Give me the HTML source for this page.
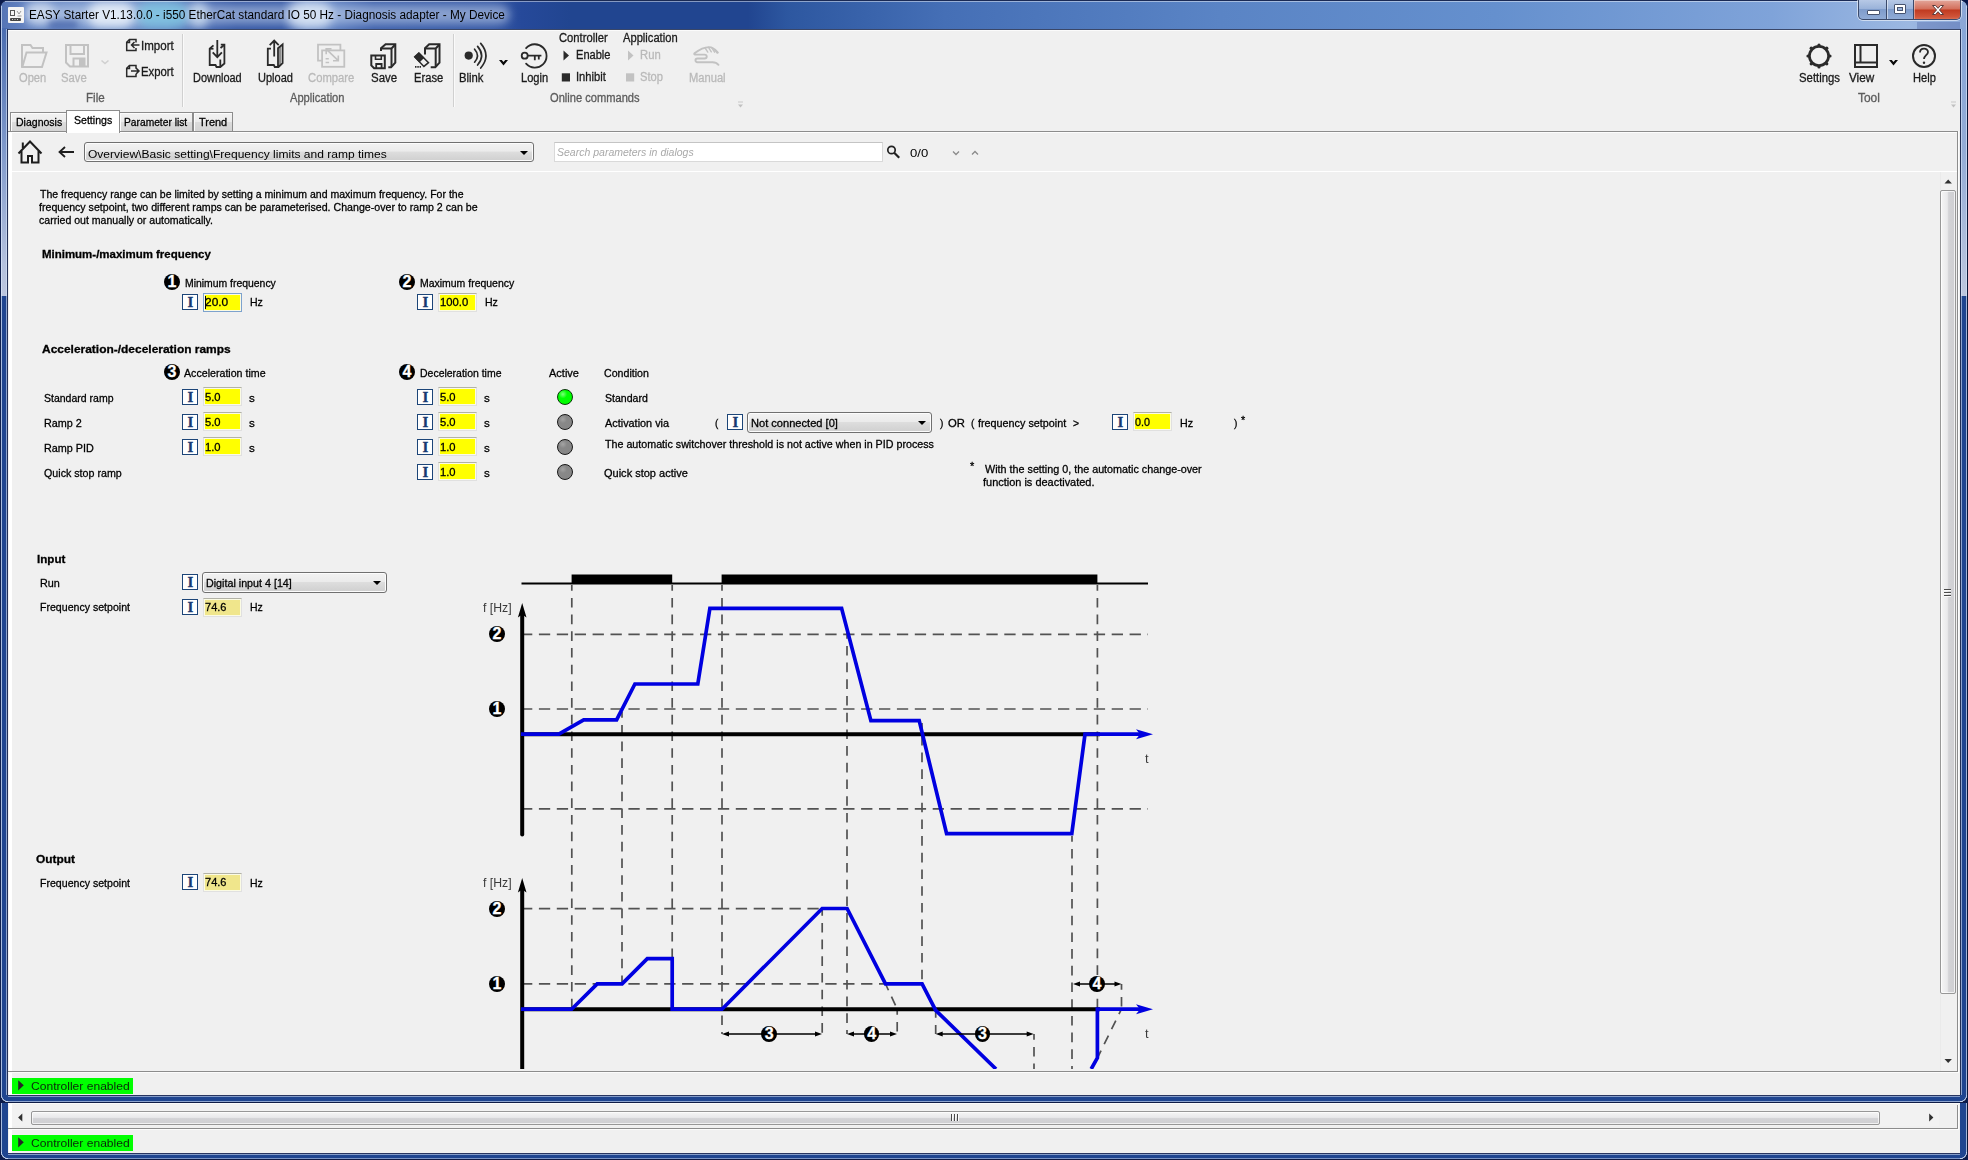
<!DOCTYPE html>
<html><head><meta charset="utf-8"><title>EASY Starter</title>
<style>
html,body{margin:0;padding:0;}
body{width:1968px;height:1160px;overflow:hidden;position:relative;background:#1f4590;font-family:"Liberation Sans",sans-serif;font-size:11px;color:#000;}
div,span,svg{position:absolute;box-sizing:border-box;}
.t{white-space:pre;line-height:1;transform-origin:0 0;display:block;-webkit-text-stroke:0.3px currentColor;}
.ib{width:16px;height:16px;background:#fff;border:1.2px solid #1c4578;padding-left:0.800px;overflow:hidden;text-align:center;font-family:"Liberation Serif",serif;font-weight:700;font-size:15px;line-height:15px;color:#173a72;-webkit-text-stroke:0.3px #173a72;}
.fld{height:19px;width:39px;border:1px solid #e0e0e0;border-top-color:#b2b2a6;background:#fbfbe4;}
.fld>i{position:absolute;left:1px;top:1px;right:1px;bottom:1px;background:#ff0;}
.fld.k>i{background:#f0e68c;}
.led{width:16px;height:16px;border-radius:50%;border:1.4px solid #161616;background:radial-gradient(circle at 35% 30%,#a4a4a4 0,#888 30%,#858585 100%);}
.led.g{background:radial-gradient(circle at 35% 30%,#7cff7c 0,#00ff00 32%,#00fa00 100%);border-color:#063806;}
.cn{width:16px;height:16px;border-radius:50%;background:#000;color:#fff;font-weight:700;font-size:16px;line-height:16.5px;text-align:center;-webkit-text-stroke:0.3px #fff;}
.dd{height:21px;border:1px solid #707070;border-radius:3px;background:linear-gradient(#f2f2f2 0,#ebebeb 45%,#dddddd 50%,#cfcfcf 100%);box-shadow:inset 0 0 0 1px #fcfcfc;}
.dd:after{content:"";position:absolute;right:5px;top:8px;border:4px solid transparent;border-top:4px solid #000;border-bottom:none;}

</style></head>
<body>
<!-- frame -->
<div style="left:0;top:0;width:1968px;height:30px;background:linear-gradient(90deg,#5473b4 0,#6585c3 1.5%,#7090c9 4%,#6a8cc8 8.500%,#4567b0 10.300%,#3558a5 12%,#3457a5 14.300%,#6a8bc8 15.600%,#5c7ec0 17%,#3d60ab 19%,#3558a5 25%,#26499a 26.500%,#214590 29%,#214590 38%,#2d57a0 40%,#456fb6 48%,#5a84c5 62%,#6590ce 76%,#7fa3d9 90%,#9cb8e2 97%,#8aa6d6 100%);"></div>
<div style="left:28px;top:5px;width:482px;height:19px;border-radius:10px;background:rgba(215,228,246,.5);filter:blur(4px);"></div>
<div style="left:24px;top:2px;width:30px;height:22px;border-radius:10px;background:rgba(235,242,252,.55);filter:blur(4px);"></div>
<div style="left:88px;top:2px;width:46px;height:26px;border-radius:12px;background:rgba(240,246,253,.8);filter:blur(5px);"></div>
<div style="left:138px;top:2px;width:50px;height:26px;border-radius:12px;background:rgba(110,200,225,.6);filter:blur(5px);"></div>
<div style="left:190px;top:2px;width:18px;height:26px;border-radius:8px;background:rgba(225,240,250,.6);filter:blur(4px);"></div>
<div style="left:288px;top:2px;width:44px;height:26px;border-radius:12px;background:rgba(235,243,252,.7);filter:blur(5px);"></div>
<div style="left:48px;top:20px;width:30px;height:9px;border-radius:4px;background:rgba(40,70,150,.5);filter:blur(3px);"></div>
<div style="left:0;top:0;width:1968px;height:1px;background:#1a2a55;"></div>
<div style="left:1px;top:1px;width:1966px;height:1px;background:rgba(255,255,255,.45);"></div>
<div style="left:0;top:28px;width:8px;height:268px;background:linear-gradient(#4a6cb0 0,#7f99cb 45%,#b4c1dd 88%,#bcc6de 100%);"></div>
<div style="left:1960px;top:28px;width:8px;height:268px;background:linear-gradient(#88a6d8 0,#93abd6 45%,#b4c1dd 88%,#bcc6de 100%);"></div>
<div style="left:0;top:6px;width:1px;height:1150px;background:#10204e;"></div>
<div style="left:1px;top:6px;width:1px;height:1150px;background:rgba(215,228,248,.75);"></div>
<div style="left:6px;top:29px;width:1px;height:1068px;background:rgba(215,228,248,.6);"></div>
<div style="left:7px;top:29px;width:1px;height:1068px;background:#222f55;"></div>
<div style="left:1967px;top:6px;width:1px;height:1150px;background:#0b1638;"></div>
<div style="left:1966px;top:6px;width:1px;height:1150px;background:rgba(215,228,248,.7);"></div>
<div style="left:1961px;top:29px;width:1px;height:1068px;background:rgba(215,228,248,.6);"></div>
<div style="left:1960px;top:29px;width:1px;height:1068px;background:#222f55;"></div>
<div style="left:0;top:0;width:8px;height:8px;background:radial-gradient(circle at 8px 8px,rgba(0,0,0,0) 7px,#1a2a55 7.5px,#0a1a4a 8.5px);"></div>
<div style="left:1960px;top:0;width:8px;height:8px;background:radial-gradient(circle at 0 8px,rgba(0,0,0,0) 7px,#1a2a55 7.5px,#07154a 8.5px);"></div>
<div style="left:1917px;top:22px;width:43px;height:7px;background:rgba(70,90,160,.33);"></div>
<div style="left:8px;top:7px;width:16px;height:16px;background:#f4f4f4;border-radius:1px;"></div>
<svg style="left:8px;top:7px" width="16" height="16" viewBox="0 0 16 16"><rect x="2.5" y="3.5" width="4" height="5" fill="none" stroke="#555" stroke-width="1"/><path d="M9 4 l2 3 l2 -3 M9.5 9 h4" fill="none" stroke="#999" stroke-width="1"/><rect x="2" y="11" width="11" height="3" rx="1" fill="#444"/><path d="M4 12.5h1M6.5 12.5h1M9 12.5h1" stroke="#ccc" stroke-width="1"/></svg>
<span class="t" style="left:28.7px;top:8.8px;font-size:12px;color:#000;-webkit-text-stroke:0;transform:scaleX(0.9819);">EASY Starter V1.13.0.0 - i550 EtherCat standard IO 50 Hz - Diagnosis adapter - My Device</span>
<div style="left:1858px;top:0;width:103px;height:20px;border:1px solid #3b4a6b;border-top:none;border-radius:0 0 5px 5px;background:linear-gradient(#b7c9e6 0,#9bb3da 45%,#7f9ccb 50%,#90abd6 100%);box-shadow:0 0 0 1px rgba(255,255,255,.55);overflow:hidden;"><div style="left:27px;top:0;width:1px;height:20px;background:#3b4a6b;"></div><div style="left:28px;top:0;width:1px;height:20px;background:rgba(255,255,255,.5);"></div><div style="left:54px;top:0;width:1px;height:20px;background:#3b4a6b;"></div><div style="left:55px;top:0;width:48px;height:20px;background:linear-gradient(#e3a79b 0,#d36f5b 45%,#c03a20 50%,#d0553a 85%,#dc7a5c 100%);box-shadow:inset 0 0 0 1px rgba(255,255,255,.4);"></div><div style="left:8px;top:10px;width:13px;height:5px;background:#fff;border:1px solid #47536f;border-radius:1px;"></div><div style="left:35px;top:4px;width:12px;height:10px;background:#fff;border:1px solid #47536f;border-radius:1px;"></div><div style="left:38px;top:7px;width:6px;height:4px;background:#9bb3da;border:1px solid #47536f;"></div><svg style="left:71px;top:4px" width="16" height="12" viewBox="0 0 16 12"><path d="M2.5 1.5h3l2.5 2.8l2.500 -2.800h3l-4 4.500l4 4.500h-3l-2.500 -2.800l-2.500 2.800h-3l4 -4.500z" fill="#fff" stroke="#5b3a3a" stroke-width="1" stroke-linejoin="round"/></svg></div>
<div style="left:8px;top:30px;width:1952px;height:1065px;background:#f0f0f0;"></div>
<div style="left:8px;top:29px;width:1952px;height:1px;background:#3a4768;"></div>
<div style="left:8px;top:30px;width:1952px;height:1px;background:#fbfbfb;"></div>
<!-- ribbon -->
<div style="left:182px;top:34px;width:1px;height:73px;background:#d0d0d0;"></div>
<div style="left:183px;top:34px;width:1px;height:73px;background:#fafafa;"></div>
<div style="left:453px;top:34px;width:1px;height:73px;background:#d0d0d0;"></div>
<div style="left:454px;top:34px;width:1px;height:73px;background:#fafafa;"></div>
<svg style="left:0;top:0" width="1968" height="132" viewBox="0 0 1968 132" fill="none" stroke-linecap="butt" stroke-linejoin="miter">
<g stroke="#c2c2c2" stroke-width="2"><path d="M22 67V45h8.500l2 3h10.500v4.500"/><path d="M22.300 67l4.200 -14.500h20l-4.500 14.500z"/></g>
<g stroke="#c2c2c2" stroke-width="2"><path d="M66 45h22v21.500h-18l-4 -4z"/><path d="M70.500 45v9h13.500v-9"/><path d="M73.500 66v-7.500h11v7.500"/><rect x="79" y="59" width="5" height="7" fill="#c2c2c2" stroke="none"/></g>
<path d="M101.500 60.500l3.500 3l3.500 -3" stroke="#d0d0d0" stroke-width="1.600"/>
<g stroke="#2a2a2a" stroke-width="1.500"><path d="M136 42.500v-3h-6.500l-2.800 2.800v8.200h9.300v-2.500"/><path d="M129.500 39.500v3h-2.800"/><path d="M139.500 45h-8M134.500 42l-3 3l3 3"/></g>
<g stroke="#2a2a2a" stroke-width="1.500"><path d="M136 68.500v-3h-6.500l-2.800 2.800v8.200h9.300v-2.500"/><path d="M129.500 65.500v3h-2.800"/><path d="M131 71h8M136 68l3 3l-3 3"/></g>
<g stroke="#2a2a2a" stroke-width="1.800"><path d="M213.500 45.300L209.700 48.700V65H215.500L216.500 67H220.300L224.400 63.500V44.700H220.800"/><path d="M209.700 48.700H213.500"/><path d="M224.400 44.700L220.500 48"/><path d="M220.300 59.500V67"/><path d="M217.300 40V57M212.700 52.300L217.300 57.200L221.900 52.300"/></g>
<g stroke="#2a2a2a" stroke-width="1.800"><path d="M271 48.700H267.800V65H273.800L274.800 67H278.500L282.600 63.200V44.400L278 48.200V66.500"/><path d="M280 47V65" stroke-width="1"/><path d="M274.200 56.400V41M269.700 45.200L274.200 40.600L278.700 45.200"/></g>
<g stroke="#c2c2c2" stroke-width="1.800"><path d="M322 60.700h-4v-16h22.400v5.500"/><rect x="322.100" y="50.400" width="22.200" height="16.400"/><path d="M326.500 49.400l11.500 11M326.200 54.200v-5.300h5.300M338.300 55.400v5.300h-5.300" stroke-width="1.600"/><path d="M325.600 58.800h3.200M325.600 62.600h3.500" stroke-width="1.500"/></g>
<g stroke="#2a2a2a" stroke-width="2"><path d="M371.300 55.500h13.500v12.700h-10.700l-2.800 -2.800z"/><path d="M375.500 55.500v3.800h5.800v-3.800" stroke-width="1.600"/><path d="M376.200 68.200v-4.200h5.400v4.200" stroke-width="1.800"/><path d="M381 51v-2.700l4.600 -4h9.700v18.300l-4.200 4.600h-2.800"/><path d="M381 48.500h10.500v18.300M391.500 48.500l3.800 -4"/></g>
<g stroke="#2a2a2a" stroke-width="2"><path d="M425 54.500v-6.200l4.200 -4h10.300v18.300l-4.200 4.600h-4.600"/><path d="M425 48.500h10.700v18.300M435.700 48.500l3.800 -4"/><path d="M414 56.900l4.900 -4.600l5.500 5.500l-5 4.700z" fill="#2a2a2a" stroke="none"/><path d="M414.700 56.900l4.200 -3.900l9.600 9.600l-4.600 3.800z" stroke-width="1.500"/><path d="M415 66.800h6" stroke-width="1.700" stroke-dasharray="1.500 0.800"/></g>
<circle cx="468.700" cy="55.600" r="4.100" fill="#2a2a2a"/>
<g stroke="#2a2a2a" stroke-width="1.700" stroke-linecap="round"><path d="M474.600 49.200Q480.400 55.700 474.600 62.200"/><path d="M477.600 46.400Q485.600 55.700 477.600 65"/><path d="M480.700 43.400Q491.200 55.700 480.700 68"/></g>
<path d="M499 60h2.800l1.700 2l1.700 -2h2.800l-4.500 5.600z" fill="#0a0a0a"/>
<g stroke="#2a2a2a" stroke-width="1.800" stroke-linecap="round"><path d="M526.100 48.200a11.700 11.700 0 1 1 0 15.500"/><circle cx="524.700" cy="55.700" r="3"/><path d="M528 55.700h13.400M534.800 56v4.200M538.800 56v3.500" stroke-linecap="butt"/></g>
<path d="M563.500 50.500l5.500 5l-5.500 5z" fill="#2a2a2a"/>
<rect x="561.800" y="73.300" width="8.200" height="8.200" fill="#2a2a2a"/>
<path d="M628 50.500l5.500 5l-5.500 5z" fill="#c2c2c2"/>
<rect x="626" y="73.300" width="8.200" height="8.200" fill="#c2c2c2"/>
<g stroke="#c2c2c2" stroke-width="1.900" stroke-linecap="round"><path d="M717.900 52.600C715 49 712 47.100 709 47.100C704 47.100 700 49 694.500 53.300C693.800 54.200 694.500 54.600 696 54.600H704.500C707.500 54.600 707.500 58.500 704.500 58.500H697.500C694.800 58.500 694.800 62.200 697.500 62.200H712.500C715 62.200 717 63 718.500 64.800"/><path d="M705 47.800l2.800 4.300M708.500 47.300l2.800 4.500M711.800 47.800l2.800 4.400M714.800 49.500l2.400 3.600" stroke-width="1.400"/></g>
<path d="M738 102h5" stroke="#c8c8c8" stroke-width="1"/><path d="M738 104.5h5l-2.500 3z" fill="#c0c0c0"/>
<path d="M1951 102h5" stroke="#c8c8c8" stroke-width="1"/><path d="M1951 104.5h5l-2.500 3z" fill="#c0c0c0"/>
<circle cx="1819.0" cy="56.0" r="9.600" stroke="#2a2a2a" stroke-width="2.700"/>
<circle cx="1819.00" cy="45.00" r="1.600" fill="#2a2a2a"/>
<circle cx="1826.78" cy="48.22" r="1.600" fill="#2a2a2a"/>
<circle cx="1830.00" cy="56.00" r="1.600" fill="#2a2a2a"/>
<circle cx="1826.78" cy="63.78" r="1.600" fill="#2a2a2a"/>
<circle cx="1819.00" cy="67.00" r="1.600" fill="#2a2a2a"/>
<circle cx="1811.22" cy="63.78" r="1.600" fill="#2a2a2a"/>
<circle cx="1808.00" cy="56.00" r="1.600" fill="#2a2a2a"/>
<circle cx="1811.22" cy="48.22" r="1.600" fill="#2a2a2a"/>
<g stroke="#2a2a2a" stroke-width="2"><rect x="1855" y="45" width="22" height="22"/><path d="M1860.500 45v17.500M1855 62.500h22" /></g>
<path d="M1889 60h2.800l1.700 2l1.700 -2h2.800l-4.500 5.600z" fill="#0a0a0a"/>
<circle cx="1924" cy="56" r="11" stroke="#2a2a2a" stroke-width="2"/>
<path d="M1920 52.500c0 -5 8 -5 8 -0.500c0 3 -4 3.500 -4 7" stroke="#2a2a2a" stroke-width="1.800"/><circle cx="1924" cy="62.800" r="1.200" fill="#2a2a2a"/>
</svg>
<span class="t" style="left:19.4px;top:71.8px;font-size:12px;color:#b9b9b9;transform:scaleX(0.9265);">Open</span>
<span class="t" style="left:60.9px;top:71.8px;font-size:12px;color:#b9b9b9;transform:scaleX(0.9393);">Save</span>
<span class="t" style="left:140.9px;top:39.8px;font-size:12px;color:#1a1a1a;transform:scaleX(0.9613);">Import</span>
<span class="t" style="left:140.9px;top:65.8px;font-size:12px;color:#1a1a1a;transform:scaleX(0.9427);">Export</span>
<span class="t" style="left:192.9px;top:71.8px;font-size:12px;color:#1a1a1a;transform:scaleX(0.9124);">Download</span>
<span class="t" style="left:258.1px;top:71.8px;font-size:12px;color:#1a1a1a;transform:scaleX(0.9177);">Upload</span>
<span class="t" style="left:308.1px;top:71.8px;font-size:12px;color:#b9b9b9;transform:scaleX(0.9380);">Compare</span>
<span class="t" style="left:370.7px;top:71.8px;font-size:12px;color:#1a1a1a;transform:scaleX(0.9540);">Save</span>
<span class="t" style="left:413.8px;top:71.8px;font-size:12px;color:#1a1a1a;transform:scaleX(0.9311);">Erase</span>
<span class="t" style="left:458.9px;top:71.8px;font-size:12px;color:#1a1a1a;transform:scaleX(0.9417);">Blink</span>
<span class="t" style="left:521.0px;top:71.8px;font-size:12px;color:#1a1a1a;transform:scaleX(0.9260);">Login</span>
<span class="t" style="left:559.2px;top:32.0px;font-size:12px;color:#1a1a1a;transform:scaleX(0.9360);">Controller</span>
<span class="t" style="left:575.9px;top:49.0px;font-size:12px;color:#1a1a1a;transform:scaleX(0.9231);">Enable</span>
<span class="t" style="left:575.9px;top:70.8px;font-size:12px;color:#1a1a1a;transform:scaleX(0.9335);">Inhibit</span>
<span class="t" style="left:623.4px;top:32.0px;font-size:12px;color:#1a1a1a;transform:scaleX(0.9299);">Application</span>
<span class="t" style="left:639.9px;top:49.0px;font-size:12px;color:#b9b9b9;transform:scaleX(0.9402);">Run</span>
<span class="t" style="left:639.9px;top:70.8px;font-size:12px;color:#b9b9b9;transform:scaleX(0.9276);">Stop</span>
<span class="t" style="left:689.0px;top:71.8px;font-size:12px;color:#b9b9b9;transform:scaleX(0.9299);">Manual</span>
<span class="t" style="left:85.9px;top:91.8px;font-size:12px;color:#5c5c5c;transform:scaleX(0.9667);">File</span>
<span class="t" style="left:290.4px;top:91.8px;font-size:12px;color:#5c5c5c;transform:scaleX(0.9282);">Application</span>
<span class="t" style="left:549.7px;top:91.8px;font-size:12px;color:#5c5c5c;transform:scaleX(0.9264);">Online commands</span>
<span class="t" style="left:1798.8px;top:71.8px;font-size:12px;color:#1a1a1a;transform:scaleX(0.9456);">Settings</span>
<span class="t" style="left:1849.4px;top:71.8px;font-size:12px;color:#1a1a1a;transform:scaleX(0.9769);">View</span>
<span class="t" style="left:1912.8px;top:71.8px;font-size:12px;color:#1a1a1a;transform:scaleX(0.9235);">Help</span>
<span class="t" style="left:1857.7px;top:91.8px;font-size:12px;color:#5c5c5c;transform:scaleX(0.9947);">Tool</span>
<!-- tabs -->
<div style="left:8.500px;top:132px;width:3.300px;height:962.500px;background:#fff;"></div>
<div style="left:8px;top:131px;width:1950px;height:941px;border:1px solid #8c8c8c;border-left:none;"></div>
<div style="left:11px;top:132px;width:1946px;height:1px;background:#fdfdfd;"></div>
<div style="left:10px;top:112px;width:57px;height:19px;border:1px solid #8c8c8c;border-bottom:none;background:linear-gradient(#f2f2f2 0,#ececec 48%,#dcdcdc 52%,#d4d4d4 100%);box-shadow:inset 1px 1px 0 #fcfcfc;"></div>
<div style="left:119px;top:112px;width:74px;height:19px;border:1px solid #8c8c8c;border-bottom:none;background:linear-gradient(#f2f2f2 0,#ececec 48%,#dcdcdc 52%,#d4d4d4 100%);box-shadow:inset 1px 1px 0 #fcfcfc;"></div>
<div style="left:193px;top:112px;width:40px;height:19px;border:1px solid #8c8c8c;border-bottom:none;background:linear-gradient(#f2f2f2 0,#ececec 48%,#dcdcdc 52%,#d4d4d4 100%);box-shadow:inset 1px 1px 0 #fcfcfc;"></div>
<div style="left:66px;top:110px;width:54px;height:23px;border:1px solid #8c8c8c;border-bottom:none;background:#fff;"></div>
<span class="t" style="left:15.9px;top:117.3px;font-size:11.5px;color:#000;transform:scaleX(0.9149);">Diagnosis</span>
<span class="t" style="left:73.9px;top:115.3px;font-size:11.5px;color:#000;transform:scaleX(0.9191);">Settings</span>
<span class="t" style="left:123.9px;top:117.3px;font-size:11.5px;color:#000;transform:scaleX(0.8909);">Parameter list</span>
<span class="t" style="left:198.9px;top:117.3px;font-size:11.5px;color:#000;transform:scaleX(0.9519);">Trend</span>
<!-- nav -->
<svg style="left:0;top:132px" width="1968" height="40" viewBox="0 132 1968 40" fill="none">
<path d="M18.500 153.500L30 141.500L41.500 153.500M21.500 151v11.500h6.500v-6.500h4v6.500h6.500v-11.500M22.800 148v-5.500" stroke="#1e1e1e" stroke-width="2"/>
<path d="M74 152h-14.500M65 147l-5.500 5l5.500 5" stroke="#1e1e1e" stroke-width="1.800"/>
<circle cx="891.500" cy="150" r="3.700" stroke="#222" stroke-width="1.700"/><path d="M894.200 152.800l5 5" stroke="#222" stroke-width="2.200"/>
<path d="M953 151.500l3 3l3 -3" stroke="#8a8a8a" stroke-width="1.300"/><path d="M972 154.500l3 -3l3 3" stroke="#8a8a8a" stroke-width="1.300"/>
</svg>
<div class="dd" style="left:84px;top:142px;width:450px;height:20px;"></div>
<span class="t" style="left:88.4px;top:147.7px;font-size:11.7px;color:#000;-webkit-text-stroke:0;transform:scaleX(1.0288);">Overview\Basic setting\Frequency limits and ramp times</span>
<div style="left:554px;top:142px;width:329px;height:20px;background:#fff;border:1px solid #d9d9d9;border-top-color:#c4c4c4;"></div>
<span class="t" style="left:557.4px;top:146.9px;font-size:11.5px;color:#a9a9a9;font-style:italic;-webkit-text-stroke:0;transform:scaleX(0.9138);">Search parameters in dialogs</span>
<span class="t" style="left:909.9px;top:147.2px;font-size:11.7px;color:#000;-webkit-text-stroke:0;transform:scaleX(1.1200);">0/0</span>
<div style="left:11px;top:171px;width:1946px;height:1px;background:#fff;"></div>
<!-- form -->
<span class="t" style="left:39.7px;top:188.9px;font-size:11.5px;color:#000;transform:scaleX(0.9143);">The frequency range can be limited by setting a minimum and maximum frequency. For the</span>
<span class="t" style="left:38.6px;top:201.9px;font-size:11.5px;color:#000;transform:scaleX(0.9239);">frequency setpoint, two different ramps can be parameterised. Change-over to ramp 2 can be</span>
<span class="t" style="left:38.9px;top:214.9px;font-size:11.5px;color:#000;transform:scaleX(0.9176);">carried out manually or automatically.</span>
<span class="t" style="left:41.8px;top:248.6px;font-size:11.5px;color:#000;font-weight:700;transform:scaleX(0.9968);">Minimum-/maximum frequency</span>
<span class="t" style="left:41.8px;top:343.9px;font-size:11.5px;color:#000;font-weight:700;transform:scaleX(1.0396);">Acceleration-/deceleration ramps</span>
<div class="cn" style="left:164.0px;top:274.0px;">1</div>
<span class="t" style="left:185.0px;top:277.9px;font-size:11.5px;color:#000;transform:scaleX(0.9049);">Minimum frequency</span>
<div class="cn" style="left:399.0px;top:274.0px;">2</div>
<span class="t" style="left:420.0px;top:277.9px;font-size:11.5px;color:#000;transform:scaleX(0.9097);">Maximum frequency</span>
<div class="ib" style="left:182.0px;top:294.0px;">I</div>
<div class="fld" style="left:202.5px;top:292.5px;border-color:#7da2ce;"><i></i></div>
<span class="t" style="left:204.9px;top:296.9px;font-size:11.5px;color:#000;transform:scaleX(1.0361);">20.0</span>
<span class="t" style="left:250.1px;top:297.4px;font-size:11.5px;color:#000;transform:scaleX(0.9173);">Hz</span>
<div style="left:205px;top:296px;width:1px;height:13px;background:#000;"></div>
<div class="ib" style="left:417.0px;top:294.0px;">I</div>
<div class="fld" style="left:437.5px;top:292.5px;"><i></i></div>
<span class="t" style="left:439.9px;top:296.9px;font-size:11.5px;color:#000;transform:scaleX(0.9798);">100.0</span>
<span class="t" style="left:484.9px;top:297.4px;font-size:11.5px;color:#000;transform:scaleX(0.9173);">Hz</span>
<div class="cn" style="left:164.0px;top:364.4px;">3</div>
<span class="t" style="left:184.4px;top:367.9px;font-size:11.5px;color:#000;transform:scaleX(0.9250);">Acceleration time</span>
<div class="cn" style="left:399.0px;top:364.4px;">4</div>
<span class="t" style="left:420.1px;top:367.9px;font-size:11.5px;color:#000;transform:scaleX(0.9108);">Deceleration time</span>
<span class="t" style="left:548.6px;top:367.9px;font-size:11.5px;color:#000;transform:scaleX(0.9576);">Active</span>
<span class="t" style="left:604.1px;top:367.9px;font-size:11.5px;color:#000;transform:scaleX(0.9240);">Condition</span>
<span class="t" style="left:44.3px;top:392.9px;font-size:11.5px;color:#000;transform:scaleX(0.9135);">Standard ramp</span>
<div class="ib" style="left:182.0px;top:389.0px;">I</div>
<div class="fld" style="left:202.5px;top:387.0px;"><i></i></div>
<span class="t" style="left:205.2px;top:391.9px;font-size:11.5px;color:#000;transform:scaleX(0.9750);">5.0</span>
<span class="t" style="left:249.3px;top:392.9px;font-size:11.5px;color:#000;transform:scaleX(1.0087);">s</span>
<div class="ib" style="left:417.0px;top:389.0px;">I</div>
<div class="fld" style="left:437.5px;top:387.0px;"><i></i></div>
<span class="t" style="left:440.2px;top:391.9px;font-size:11.5px;color:#000;transform:scaleX(0.9750);">5.0</span>
<span class="t" style="left:484.3px;top:392.9px;font-size:11.5px;color:#000;transform:scaleX(1.0087);">s</span>
<div class="led g" style="left:557px;top:388.8px;"></div>
<span class="t" style="left:44.4px;top:417.9px;font-size:11.5px;color:#000;transform:scaleX(0.9409);">Ramp 2</span>
<div class="ib" style="left:182.0px;top:414.0px;">I</div>
<div class="fld" style="left:202.5px;top:412.0px;"><i></i></div>
<span class="t" style="left:205.2px;top:416.9px;font-size:11.5px;color:#000;transform:scaleX(0.9750);">5.0</span>
<span class="t" style="left:249.3px;top:417.9px;font-size:11.5px;color:#000;transform:scaleX(1.0087);">s</span>
<div class="ib" style="left:417.0px;top:414.0px;">I</div>
<div class="fld" style="left:437.5px;top:412.0px;"><i></i></div>
<span class="t" style="left:440.2px;top:416.9px;font-size:11.5px;color:#000;transform:scaleX(0.9750);">5.0</span>
<span class="t" style="left:484.3px;top:417.9px;font-size:11.5px;color:#000;transform:scaleX(1.0087);">s</span>
<div class="led" style="left:557px;top:413.8px;"></div>
<span class="t" style="left:44.4px;top:442.9px;font-size:11.5px;color:#000;transform:scaleX(0.9407);">Ramp PID</span>
<div class="ib" style="left:182.0px;top:439.0px;">I</div>
<div class="fld" style="left:202.5px;top:437.0px;"><i></i></div>
<span class="t" style="left:205.2px;top:441.9px;font-size:11.5px;color:#000;transform:scaleX(0.9750);">1.0</span>
<span class="t" style="left:249.3px;top:442.9px;font-size:11.5px;color:#000;transform:scaleX(1.0087);">s</span>
<div class="ib" style="left:417.0px;top:439.0px;">I</div>
<div class="fld" style="left:437.5px;top:437.0px;"><i></i></div>
<span class="t" style="left:440.2px;top:441.9px;font-size:11.5px;color:#000;transform:scaleX(0.9750);">1.0</span>
<span class="t" style="left:484.3px;top:442.9px;font-size:11.5px;color:#000;transform:scaleX(1.0087);">s</span>
<div class="led" style="left:557px;top:438.8px;"></div>
<span class="t" style="left:43.8px;top:467.9px;font-size:11.5px;color:#000;transform:scaleX(0.9291);">Quick stop ramp</span>
<div class="ib" style="left:417.0px;top:464.0px;">I</div>
<div class="fld" style="left:437.5px;top:462.0px;"><i></i></div>
<span class="t" style="left:440.2px;top:466.9px;font-size:11.5px;color:#000;transform:scaleX(0.9750);">1.0</span>
<span class="t" style="left:484.3px;top:467.9px;font-size:11.5px;color:#000;transform:scaleX(1.0087);">s</span>
<div class="led" style="left:557px;top:463.8px;"></div>
<span class="t" style="left:604.8px;top:392.9px;font-size:11.5px;color:#000;transform:scaleX(0.9167);">Standard</span>
<span class="t" style="left:604.8px;top:417.9px;font-size:11.5px;color:#000;transform:scaleX(0.9459);">Activation via</span>
<span class="t" style="left:715.0px;top:417.9px;font-size:11.5px;color:#000;transform:scaleX(0.8585);">(</span>
<div class="ib" style="left:727.0px;top:414.0px;">I</div>
<div class="dd" style="left:747px;top:412px;width:185px;"></div>
<span class="t" style="left:750.7px;top:417.9px;font-size:11.5px;color:#000;transform:scaleX(0.9639);">Not connected [0]</span>
<span class="t" style="left:939.5px;top:417.9px;font-size:11.5px;color:#000;transform:scaleX(0.8846);">)</span>
<span class="t" style="left:948.1px;top:417.9px;font-size:11.5px;color:#000;transform:scaleX(0.9797);">OR</span>
<span class="t" style="left:970.9px;top:417.9px;font-size:11.5px;color:#000;transform:scaleX(0.8846);">(</span>
<span class="t" style="left:978.4px;top:417.9px;font-size:11.5px;color:#000;transform:scaleX(0.9385);">frequency setpoint</span>
<span class="t" style="left:1073.0px;top:417.9px;font-size:11.5px;color:#000;transform:scaleX(0.9079);">&gt;</span>
<div class="ib" style="left:1112.0px;top:414.0px;">I</div>
<div class="fld" style="left:1132.5px;top:412.0px;"><i></i></div>
<span class="t" style="left:1135.2px;top:416.9px;font-size:11.5px;color:#000;transform:scaleX(0.9375);">0.0</span>
<span class="t" style="left:1180.0px;top:417.9px;font-size:11.5px;color:#000;transform:scaleX(0.9316);">Hz</span>
<span class="t" style="left:1234.3px;top:417.9px;font-size:11.5px;color:#000;transform:scaleX(0.8846);">)</span>
<span class="t" style="left:1241.1px;top:414.9px;font-size:11.5px;color:#000;transform:scaleX(0.9366);">*</span>
<span class="t" style="left:604.8px;top:438.9px;font-size:11.5px;color:#000;transform:scaleX(0.9305);">The automatic switchover threshold is not active when in PID process</span>
<span class="t" style="left:604.1px;top:467.9px;font-size:11.5px;color:#000;transform:scaleX(0.9569);">Quick stop active</span>
<span class="t" style="left:970.0px;top:461.4px;font-size:11.5px;color:#000;transform:scaleX(0.9589);">*</span>
<span class="t" style="left:984.7px;top:463.9px;font-size:11.5px;color:#000;transform:scaleX(0.9364);">With the setting 0, the automatic change-over</span>
<span class="t" style="left:983.4px;top:476.9px;font-size:11.5px;color:#000;transform:scaleX(0.9530);">function is deactivated.</span>
<span class="t" style="left:37.3px;top:553.9px;font-size:11.5px;color:#000;font-weight:700;transform:scaleX(1.0103);">Input</span>
<span class="t" style="left:39.7px;top:577.9px;font-size:11.5px;color:#000;transform:scaleX(0.9427);">Run</span>
<div class="ib" style="left:182.0px;top:574.0px;">I</div>
<div class="dd" style="left:202px;top:572px;width:185px;"></div>
<span class="t" style="left:205.8px;top:577.9px;font-size:11.5px;color:#000;transform:scaleX(0.9320);">Digital input 4 [14]</span>
<span class="t" style="left:39.7px;top:602.4px;font-size:11.5px;color:#000;transform:scaleX(0.9201);">Frequency setpoint</span>
<div class="ib" style="left:182.0px;top:599.0px;">I</div>
<div class="fld k" style="left:202.5px;top:597.5px;"><i></i></div>
<span class="t" style="left:205.4px;top:601.9px;font-size:11.5px;color:#000;transform:scaleX(0.9602);">74.6</span>
<span class="t" style="left:250.1px;top:602.4px;font-size:11.5px;color:#000;transform:scaleX(0.9102);">Hz</span>
<span class="t" style="left:36.0px;top:853.9px;font-size:11.5px;color:#000;font-weight:700;transform:scaleX(1.0375);">Output</span>
<span class="t" style="left:39.7px;top:877.9px;font-size:11.5px;color:#000;transform:scaleX(0.9201);">Frequency setpoint</span>
<div class="ib" style="left:182.0px;top:874.0px;">I</div>
<div class="fld k" style="left:202.5px;top:872.5px;"><i></i></div>
<span class="t" style="left:205.4px;top:876.9px;font-size:11.5px;color:#000;transform:scaleX(0.9602);">74.6</span>
<span class="t" style="left:250.1px;top:877.9px;font-size:11.5px;color:#000;transform:scaleX(0.9102);">Hz</span>
<!-- charts -->
<svg style="left:470px;top:565px" width="700" height="504" viewBox="470 565 700 504" fill="none">
<path d="M521.500 583.500H1148" stroke="#000" stroke-width="1.800"/>
<rect x="571.600" y="574.500" width="100.600" height="9.500" fill="#000"/><rect x="721.600" y="574.500" width="375.800" height="9.500" fill="#000"/>
<g stroke="#525252" stroke-width="1.700" stroke-dasharray="11.300 6.600">
<path d="M521 634.300H1148"/><path d="M521 709H1148"/><path d="M521 808.800H1148"/>
<path d="M521 908.700H822"/><path d="M521 983.900H886"/>
</g>
<g stroke="#525252" stroke-width="1.700" stroke-dasharray="9.600 7.100" stroke-dashoffset="3.800">
<path d="M571.800 585V1009"/><path d="M622 712V984"/><path d="M672.200 585V958"/><path d="M722 585V1034"/>
<path d="M847 633V1034"/><path d="M922 723V984"/><path d="M1072 836V1069"/><path d="M1097.400 585V1009"/>
<path d="M822.200 910V1034"/><path d="M897.200 1009V1034"/><path d="M935.700 1012V1034"/><path d="M1034 1034V1069"/><path d="M1121.500 984V1009"/>
<path d="M886 985L897.200 1009"/><path d="M1121.500 1009L1097.400 1058"/>
</g>
<path d="M522.200 612V834.500" stroke="#000" stroke-width="4" stroke-linecap="round"/><path d="M522.200 603l-4.300 14.500l4.300 -3l4.300 3z" fill="#000"/>
<path d="M522.200 887V1069" stroke="#000" stroke-width="4"/><path d="M522.200 878l-4.300 14.500l4.300 -3l4.300 3z" fill="#000"/>
<path d="M522 734.200H1100" stroke="#000" stroke-width="4"/>
<path d="M522 1009.200H1100" stroke="#000" stroke-width="4"/>
<g stroke="#0000e0" stroke-width="3.700" stroke-linejoin="miter">
<path d="M521 734.200H558.800L583.700 719.900H616.600L634.900 684H697.800L709.900 608.300H841.600L870.900 720.600H919.200L946.600 833.700H1071.800L1085 734.200H1142"/>
<path d="M521 1009.200H571.600L597.200 983.900H622.100L647.300 958.700H672.200V1009.200H722L822.200 908.500H847.100L885.500 983.900H922.100L935.700 1010.300L996 1069"/>
<path d="M1142 1009.200H1097.400V1057.800L1091.200 1069"/>
</g>
<path d="M1153 734.200l-17 -5l4 5l-4 5z" fill="#0000e0"/><path d="M1153 1009.200l-17 -5l4 5l-4 5z" fill="#0000e0"/>
<path d="M725.0 1034.0H819.0" stroke="#000" stroke-width="1.300"/>
<path d="M722.0 1034.0l7 -2.600v5.200z" fill="#000"/><path d="M822.0 1034.0l-7 -2.600v5.200z" fill="#000"/>
<path d="M850.0 1034.0H894.0" stroke="#000" stroke-width="1.300"/>
<path d="M847.0 1034.0l7 -2.600v5.200z" fill="#000"/><path d="M897.0 1034.0l-7 -2.600v5.200z" fill="#000"/>
<path d="M938.7 1034.0H1030.7" stroke="#000" stroke-width="1.300"/>
<path d="M935.7 1034.0l7 -2.600v5.200z" fill="#000"/><path d="M1033.7 1034.0l-7 -2.600v5.200z" fill="#000"/>
<path d="M1076.0 984.0H1118.5" stroke="#000" stroke-width="1.300"/>
<path d="M1073.0 984.0l7 -2.600v5.200z" fill="#000"/><path d="M1121.5 984.0l-7 -2.600v5.200z" fill="#000"/>
</svg>
<span class="t" style="left:483.0px;top:602.1px;font-size:12px;color:#3a3a3a;-webkit-text-stroke:0;transform:scaleX(1.0209);">f [Hz]</span>
<span class="t" style="left:483.0px;top:877.3px;font-size:12px;color:#3a3a3a;-webkit-text-stroke:0;transform:scaleX(1.0209);">f [Hz]</span>
<span class="t" style="left:1145.2px;top:753.3px;font-size:12px;color:#3a3a3a;-webkit-text-stroke:0;transform:scaleX(1.0766);">t</span>
<span class="t" style="left:1145.2px;top:1028.3px;font-size:12px;color:#3a3a3a;-webkit-text-stroke:0;transform:scaleX(1.0766);">t</span>
<div class="cn" style="left:489.1px;top:626.1px;width:15.8px;height:15.8px;line-height:16.4px;font-size:16px;">2</div>
<div class="cn" style="left:489.1px;top:701.1px;width:15.8px;height:15.8px;line-height:16.4px;font-size:16px;">1</div>
<div class="cn" style="left:489.1px;top:901.1px;width:15.8px;height:15.8px;line-height:16.4px;font-size:16px;">2</div>
<div class="cn" style="left:489.1px;top:976.1px;width:15.8px;height:15.8px;line-height:16.4px;font-size:16px;">1</div>
<div class="cn" style="left:761.3px;top:1026.1px;width:15.8px;height:15.8px;line-height:16.4px;font-size:16px;">3</div>
<div class="cn" style="left:863.7px;top:1026.1px;width:15.8px;height:15.8px;line-height:16.4px;font-size:16px;">4</div>
<div class="cn" style="left:974.6px;top:1026.1px;width:15.8px;height:15.8px;line-height:16.4px;font-size:16px;">3</div>
<div class="cn" style="left:1089.1px;top:976.1px;width:15.8px;height:15.8px;line-height:16.4px;font-size:16px;">4</div>
<!-- vscroll -->
<div style="left:1940px;top:172px;width:17px;height:899px;background:#f0f0f0;border-left:1px solid #eaeaea;"></div>
<div style="left:1940px;top:190px;width:15.500px;height:804px;border:1px solid #979797;border-radius:2px;background:linear-gradient(90deg,#f5f5f5 0,#e9e9eb 45%,#d3d3d6 55%,#cfcfd2 100%);box-shadow:inset 0 0 0 1px rgba(255,255,255,.7);"></div>
<div style="left:1944px;top:588.500px;width:7px;height:1px;background:#4a4a4a;box-shadow:0 1px 0 #fafafa,0 3px 0 #4a4a4a,0 4px 0 #fafafa,0 6px 0 #4a4a4a,0 7px 0 #fafafa;"></div>
<svg style="left:1940px;top:172px" width="17" height="899" viewBox="1940 172 17 899"><path d="M1944.500 183.500l3.700 -4l3.700 4z" fill="#303030"/><path d="M1944.500 1059l3.700 4l3.700 -4z" fill="#303030"/></svg>
<div style="left:8px;top:1072px;width:1951px;height:1px;background:#fcfcfc;"></div>
<div style="left:1958px;top:131px;width:1px;height:942px;background:#fcfcfc;"></div>
<!-- status -->
<div style="left:12px;top:1078px;width:121px;height:16px;background:#00ff00;"></div>
<svg style="left:17px;top:1080px" width="8" height="11" viewBox="0 0 8 11"><path d="M1.200 0.200l5.600 5.100l-5.600 5.100z" fill="#262626"/></svg>
<span class="t" style="left:30.7px;top:1080.1px;font-size:11.7px;color:#0a2a0a;-webkit-text-stroke:0;transform:scaleX(1.0333);">Controller enabled</span>
<div style="left:0;top:1095px;width:1968px;height:8px;background:#1f4590;"></div>
<div style="left:8px;top:1095px;width:1952px;height:1px;background:#283560;"></div>
<div style="left:8px;top:1096px;width:1952px;height:1px;background:rgba(215,228,248,.55);"></div>
<div style="left:2px;top:1101px;width:1964px;height:1px;background:rgba(215,228,248,.6);"></div>
<div style="left:0;top:1102px;width:1968px;height:1px;background:#0e1b45;"></div>
<div style="left:8px;top:1103px;width:1952px;height:50px;background:#f0f0f0;"></div>
<div style="left:8.500px;top:1103px;width:3.300px;height:50px;background:#fff;"></div>
<div style="left:8px;top:1105px;width:1950px;height:23.500px;border:1px solid #8c8c8c;border-top:none;border-left:none;"></div>
<div style="left:8px;top:1103px;width:1952px;height:1px;background:#fafafa;"></div>
<div style="left:12px;top:1110px;width:1927px;height:16px;background:#f2f2f2;"></div>
<div style="left:30.500px;top:1110.500px;width:1849px;height:14px;border:1px solid #979797;border-radius:2px;background:linear-gradient(#f5f5f5 0,#e9e9eb 45%,#d3d3d6 55%,#cfcfd2 100%);box-shadow:inset 0 0 0 1px rgba(255,255,255,.7);"></div>
<div style="left:951px;top:1114px;width:1px;height:7px;background:#4a4a4a;box-shadow:1px 0 0 #fafafa,3px 0 0 #4a4a4a,4px 0 0 #fafafa,6px 0 0 #4a4a4a,7px 0 0 #fafafa;"></div>
<svg style="left:12px;top:1108px" width="1930" height="18" viewBox="12 1108 1930 18"><path d="M22.300 1113.500l-4.200 4l4.200 4z" fill="#303030"/><path d="M1929.200 1113.500l4.200 4l-4.200 4z" fill="#303030"/></svg>
<div style="left:10px;top:1128.500px;width:1949px;height:1px;background:#fcfcfc;"></div>
<div style="left:1958px;top:1105px;width:1px;height:24px;background:#fcfcfc;"></div>
<div style="left:12px;top:1135px;width:121px;height:16px;background:#00ff00;"></div>
<svg style="left:17px;top:1137px" width="8" height="11" viewBox="0 0 8 11"><path d="M1.200 0.200l5.600 5.100l-5.600 5.100z" fill="#262626"/></svg>
<span class="t" style="left:30.7px;top:1137.1px;font-size:11.7px;color:#0a2a0a;-webkit-text-stroke:0;transform:scaleX(1.0333);">Controller enabled</span>
<div style="left:0;top:1153px;width:1968px;height:7px;background:#1f4590;"></div>
<div style="left:8px;top:1153px;width:1952px;height:1px;background:#283560;"></div>
<div style="left:8px;top:1154px;width:1952px;height:1px;background:rgba(215,228,248,.55);"></div>
<div style="left:2px;top:1158px;width:1964px;height:1px;background:rgba(215,228,248,.5);"></div>
<div style="left:0;top:1159px;width:1968px;height:1px;background:#0e1b45;"></div>
<div style="left:0;top:1095px;width:8px;height:8px;background:radial-gradient(circle at 8px 0,rgba(0,0,0,0) 5.800px,rgba(215,228,248,.8) 6.300px,rgba(215,228,248,.8) 6.900px,#0e1b45 7.400px,#0a1a4a 8.500px);"></div>
<div style="left:1960px;top:1095px;width:8px;height:8px;background:radial-gradient(circle at 0 0,rgba(0,0,0,0) 5.800px,rgba(215,228,248,.8) 6.300px,rgba(215,228,248,.8) 6.900px,#0e1b45 7.400px,#0a1a4a 8.500px);"></div>
<div style="left:0;top:1152px;width:8px;height:8px;background:radial-gradient(circle at 8px 0,rgba(0,0,0,0) 5.800px,rgba(215,228,248,.8) 6.300px,rgba(215,228,248,.8) 6.900px,#0e1b45 7.400px,#0a1a4a 8.500px);"></div>
<div style="left:1960px;top:1152px;width:8px;height:8px;background:radial-gradient(circle at 0 0,rgba(0,0,0,0) 5.800px,rgba(215,228,248,.8) 6.300px,rgba(215,228,248,.8) 6.900px,#0e1b45 7.400px,#0a1a4a 8.500px);"></div>
</body></html>
